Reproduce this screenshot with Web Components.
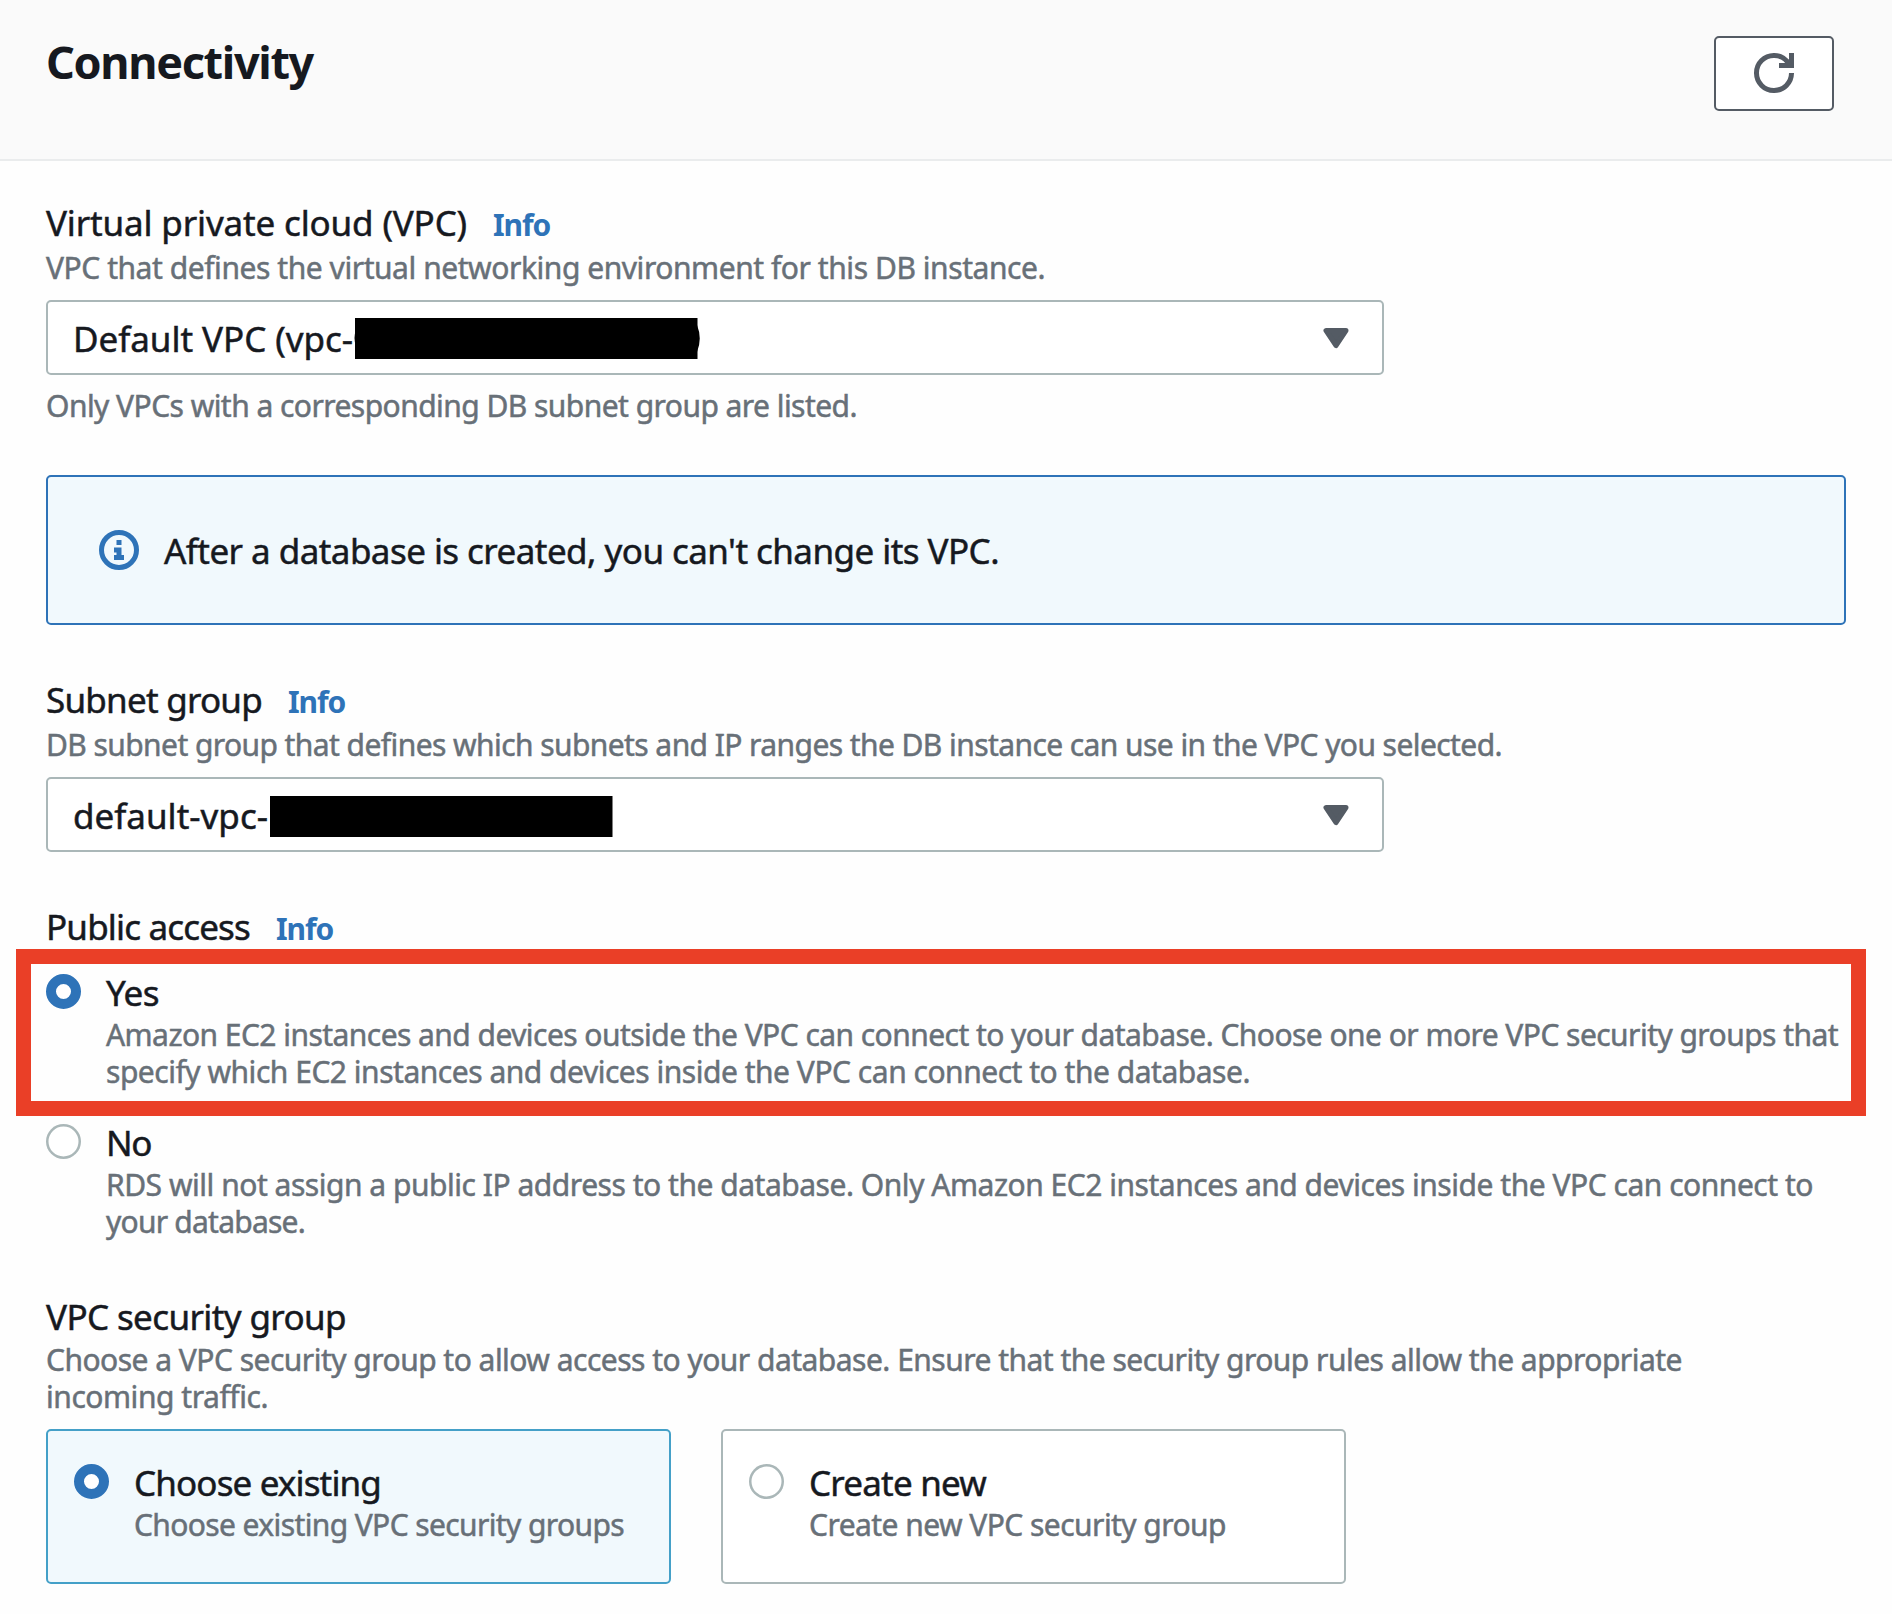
<!DOCTYPE html>
<html lang="en">
<head>
<meta charset="utf-8">
<title>Connectivity</title>
<style>
html,body{margin:0;background:#fefefe}
body{width:1892px;height:1614px;overflow:hidden;font-family:"Noto Sans","Open Sans",sans-serif;color:#16191f}
</style>
</head>
<body>
<connectivity-page></connectivity-page>
<script>
const define = (name, html, setup) => {
  const template = document.createElement('template');
  template.innerHTML = html;
  customElements.define(name, class extends HTMLElement {
    connectedCallback() {
      if (this.shadowRoot) return;
      this.attachShadow({mode: 'open'}).append(template.content.cloneNode(true));
      if (setup) setup(this, this.shadowRoot);
    }
  });
};

/* One line of text tracked to a given measure. */
define('text-line', `<style>
:host{display:block;flex:none;white-space:nowrap;font-size:35px;line-height:46px;height:44px;-webkit-text-stroke:.5px currentColor}
:host([kind=title]){font-size:45px;font-weight:700;line-height:57px;height:56px;-webkit-text-stroke-width:0}
:host([kind=hint]){font-size:30px;line-height:38px;height:37px;color:#687078}
:host([kind=link]){font-size:30px;font-weight:700;line-height:50px;height:44px;color:#2e73b8;-webkit-text-stroke-width:0}
span{display:inline-block}
</style><span><slot></slot></span>`, (host, root) => {
  const span = root.querySelector('span');
  const measure = Number(host.getAttribute('measure'));
  const natural = span.getBoundingClientRect().width;
  span.style.letterSpacing = ((measure - 1 - natural) / host.textContent.length).toFixed(3) + 'px';
  host.style.width = measure + 'px';
});

define('refresh-button', `<style>
:host{display:flex;align-items:center;justify-content:center;box-sizing:border-box;width:120px;height:75px;border:2px solid #545b64;border-radius:5px;background:#fff}
svg{display:block;width:40px;height:40px;margin-bottom:1px}
</style><svg viewBox="0 0 16 16" fill="none" stroke="#545b64" stroke-width="2"><path d="M10 5h5V0"/><path d="M15 8a6.957 6.957 0 0 1-7 7 6.957 6.957 0 0 1-7-7 6.957 6.957 0 0 1 7-7 6.87 6.87 0 0 1 6.3 4"/></svg>`);

define('panel-header', `<style>
:host{display:flex;justify-content:space-between;align-items:flex-start;box-sizing:border-box;height:161px;padding:33px 58px 0 46px;background:#fafafa;border-bottom:2px solid #eaeced}
refresh-button{margin-top:3px}
</style><slot></slot><refresh-button></refresh-button>`);

define('field-label', `<style>
:host{display:flex;height:44px;gap:25px}
</style><slot></slot>`);

define('select-box', `<style>
:host{display:flex;align-items:center;box-sizing:border-box;width:1338px;height:75px;padding:0 26px 0 25px;border:2px solid #aab7b8;border-radius:5px;background:#fff}
.caret{width:40px;height:40px;margin-left:auto;margin-top:1px}
</style><slot></slot><svg class="caret" viewBox="0 0 16 16" fill="#545b64" stroke="#545b64" stroke-width="2" stroke-linejoin="round"><path d="M4 5h8l-4 6-4-6z"/></svg>`);

define('redacted-bar', `<style>
:host{display:block;flex:none;width:345px;height:41px}
svg{display:block;overflow:visible}
</style><svg width="345" height="41"><rect width="342.5" height="41"/><path class="p" d="M342 7Q347.500 20.500 342 34ZM1 12Q-2 20 1 28Z"/></svg>`, (host, root) => {
  if (!host.hasAttribute('bulge')) root.querySelector('.p').remove();
});

define('info-alert', `<style>
:host{display:flex;align-items:center;box-sizing:border-box;width:1800px;height:150px;padding-left:51px;gap:25px;border:2px solid #2e73b8;border-radius:5px;background:#f1f9fd}
svg{width:40px;height:40px}
</style><svg viewBox="0 0 16 16" fill="none" stroke="#2e73b8" stroke-width="2"><circle cx="8" cy="8" r="7"/><path d="M8 11V8H6M10 11H6M8 6V4"/></svg><slot></slot>`);

define('radio-option', `<style>
:host{display:flex;gap:25px;position:relative}
i{flex:none;width:35px;height:35px;margin-top:4px;box-shadow:inset 0 0 0 2.500px #aab7b8;border-radius:50%;background:#fff}
:host([checked]) i{box-sizing:border-box;box-shadow:none;border:10px solid #2e73b8}
div{display:flex;flex-direction:column;gap:2px}
.mark{display:none}
:host([highlight]) .mark{display:block;position:absolute;box-sizing:border-box;left:-30.500px;top:-21.500px;width:1850px;height:167.500px;border:15px solid #ea3f27}
</style><i></i><div><slot name="label"></slot><section><slot></slot></section></div><span class="mark"></span>`);

define('radio-tile', `<style>
:host{display:block;box-sizing:border-box;width:625px;height:155px;padding:29px 0 0 26px;border:2px solid #aab7b8;border-radius:5px;background:#fff}
:host([selected]){border-color:#44a0c8;background:#f1f9fd}
</style><slot></slot>`);

define('connectivity-page', `<style>
:host{display:block}
main{display:flex;flex-direction:column;padding:39px 46px 0}
.h{margin-top:5px}
.s{margin-top:14px}
.tiles{display:flex;gap:50px;margin-top:14px}
</style>
<panel-header><text-line kind="title" measure="268">Connectivity</text-line></panel-header>
<main>
<field-label><text-line measure="422">Virtual private cloud (VPC)</text-line><text-line kind="link" measure="58">Info</text-line></field-label>
<text-line class="h" kind="hint" measure="1000">VPC that defines the virtual networking environment for this DB instance.</text-line>
<select-box class="s"><text-line measure="281">Default VPC (vpc-</text-line><redacted-bar bulge style="margin-left:1px;margin-top:2px"></redacted-bar></select-box>
<text-line style="margin-top:12px" kind="hint" measure="812">Only VPCs with a corresponding DB subnet group are listed.</text-line>
<info-alert style="margin-top:51px"><text-line measure="836">After a database is created, you can't change its VPC.</text-line></info-alert>
<field-label style="margin-top:52px"><text-line measure="217">Subnet group</text-line><text-line kind="link" measure="58">Info</text-line></field-label>
<text-line class="h" kind="hint" measure="1457">DB subnet group that defines which subnets and IP ranges the DB instance can use in the VPC you selected.</text-line>
<select-box class="s"><text-line measure="196">default-vpc-</text-line><redacted-bar style="margin-left:.5px;margin-top:4px"></redacted-bar></select-box>
<field-label style="margin-top:52px"><text-line measure="205">Public access</text-line><text-line kind="link" measure="58">Info</text-line></field-label>
<radio-option checked highlight style="margin-top:22px"><text-line slot="label" measure="54">Yes</text-line><text-line kind="hint" measure="1733">Amazon EC2 instances and devices outside the VPC can connect to your database. Choose one or more VPC security groups that</text-line><text-line kind="hint" measure="1145">specify which EC2 instances and devices inside the VPC can connect to the database.</text-line></radio-option>
<radio-option style="margin-top:30px"><text-line slot="label" measure="46">No</text-line><text-line kind="hint" measure="1708">RDS will not assign a public IP address to the database. Only Amazon EC2 instances and devices inside the VPC can connect to</text-line><text-line kind="hint" measure="200">your database.</text-line></radio-option>
<text-line style="margin-top:54px" measure="301">VPC security group</text-line>
<text-line style="margin-top:3px" kind="hint" measure="1637">Choose a VPC security group to allow access to your database. Ensure that the security group rules allow the appropriate</text-line>
<text-line kind="hint" measure="223">incoming traffic.</text-line>
<div class="tiles">
<radio-tile selected><radio-option checked><text-line slot="label" measure="248">Choose existing</text-line><text-line kind="hint" measure="491">Choose existing VPC security groups</text-line></radio-option></radio-tile>
<radio-tile><radio-option><text-line slot="label" measure="178">Create new</text-line><text-line kind="hint" measure="418">Create new VPC security group</text-line></radio-option></radio-tile>
</div>
</main>`);
</script>
</body>
</html>
